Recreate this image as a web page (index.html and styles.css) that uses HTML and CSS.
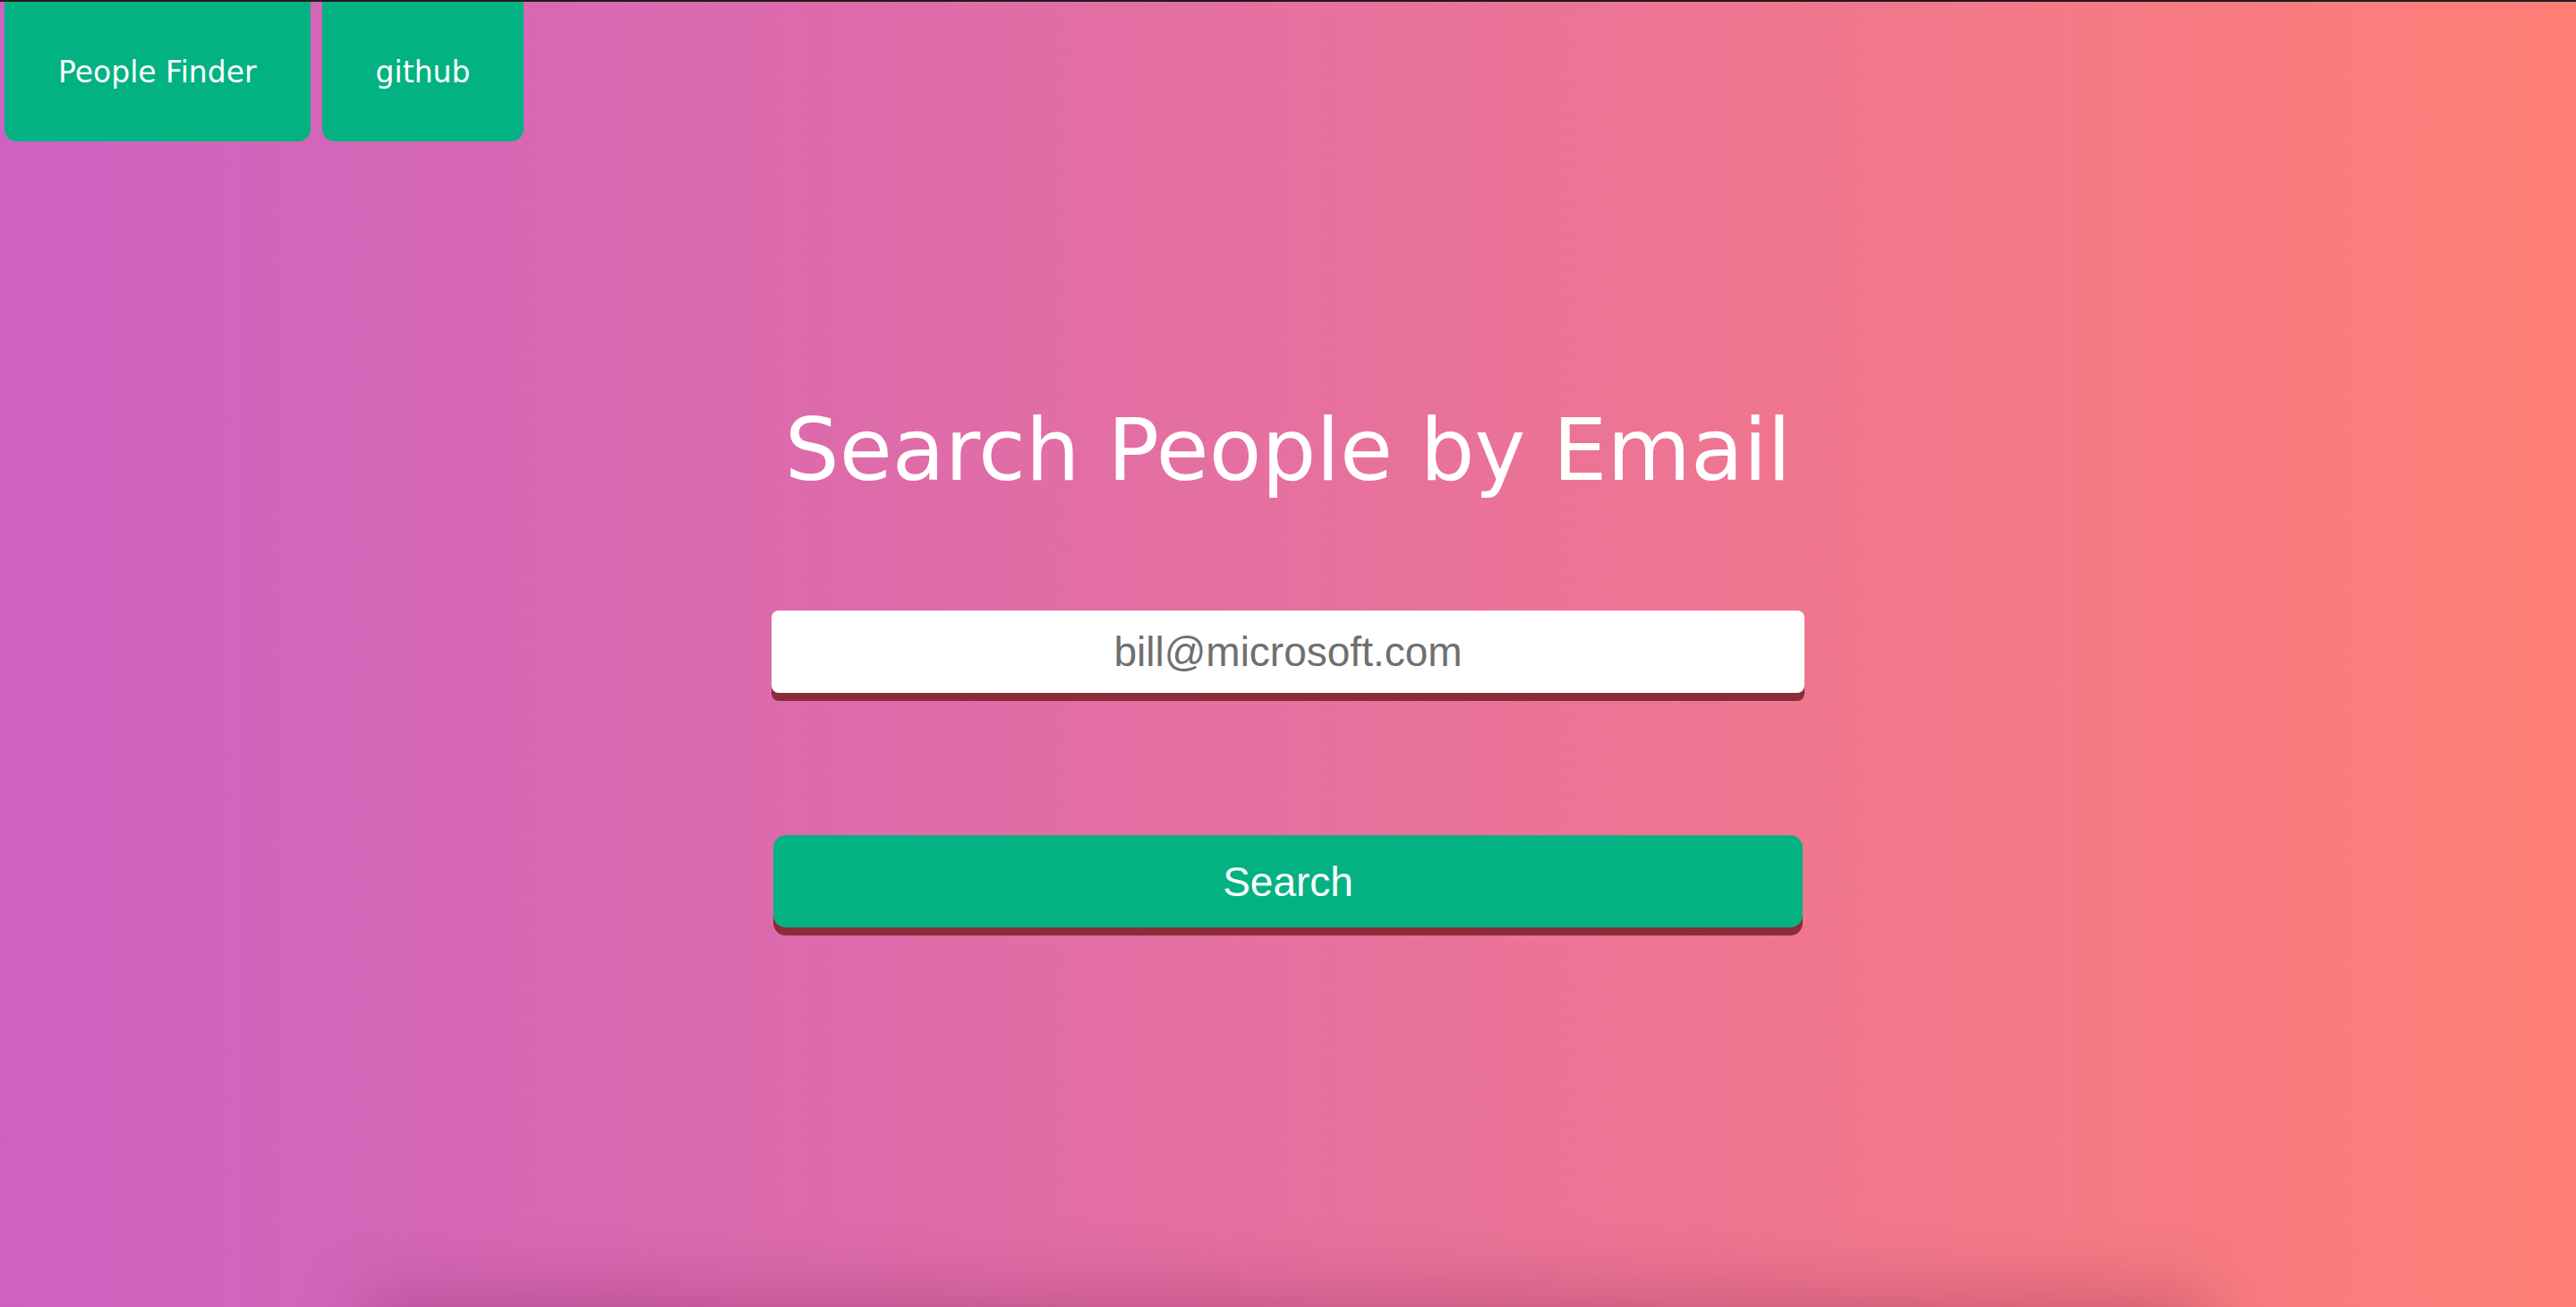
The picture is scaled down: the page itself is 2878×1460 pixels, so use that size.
FILE: index.html
```html
<!DOCTYPE html>
<html lang="en">
<head>
<meta charset="utf-8">
<title>People Finder</title>
<link rel="stylesheet" href="styles.css">
</head>
<body>
  <div class="page">
    <nav class="nav">
      <a class="nav-btn" href="#">People Finder</a>
      <a class="nav-btn" href="#">github</a>
    </nav>
    <main class="main">
      <h1 class="title">Search People by Email</h1>
      <form class="search-form">
        <input class="email-input" type="text" placeholder="bill@microsoft.com">
        <button class="search-btn" type="button">Search</button>
      </form>
      <div class="results"></div>
    </main>
  </div>
</body>
</html>
```

FILE: styles.css
```css
html, body {
  margin: 0;
  padding: 0;
}
body {
  background: linear-gradient(90deg, #cd62c2 0%, #e6709f 50%, #ff7f76 100%);
  min-height: 100vh;
  overflow: hidden;
}
.page {
  border-top: 2px solid #1e1a1c;
  min-height: 100vh;
  box-sizing: border-box;
}
.nav {
  display: flex;
  gap: 13px;
  padding-left: 5px;
}
.nav-btn {
  display: flex;
  align-items: center;
  height: 156px;
  padding: 0 60px;
  background: #03b282;
  color: #fff;
  text-decoration: none;
  font-family: "DejaVu Sans", sans-serif;
  font-size: 33px;
  border-radius: 0 0 14px 14px;
}
.main {
  display: flex;
  flex-direction: column;
  align-items: center;
}
.title {
  margin: 285px 0 0;
  font-family: "DejaVu Sans", sans-serif;
  font-weight: normal;
  font-size: 96px;
  line-height: 120px;
  color: #fff;
}
.search-form {
  display: flex;
  flex-direction: column;
  align-items: center;
  margin-top: 119px;
}
.email-input {
  width: 1154px;
  height: 92px;
  box-sizing: border-box;
  border: none;
  border-radius: 8px;
  background: #fff;
  box-shadow: 0 9px 0 #8b2c39;
  text-align: center;
  font-family: "Liberation Sans", Arial, sans-serif;
  font-size: 46px;
  color: #666;
  outline: none;
}
.email-input::placeholder {
  color: #6f6f6f;
}
.search-btn {
  margin-top: 159px;
  width: 1150px;
  height: 103px;
  border: none;
  border-radius: 14px;
  background: #03b282;
  box-shadow: 0 9px 0 #8b2c39;
  color: #fff;
  font-family: "Liberation Sans", Arial, sans-serif;
  font-size: 46px;
  cursor: pointer;
}
.results {
  margin-top: 430px;
  width: 2050px;
  height: 300px;
  box-shadow: 0 -10px 80px rgba(90, 10, 60, 0.3);
}
```
